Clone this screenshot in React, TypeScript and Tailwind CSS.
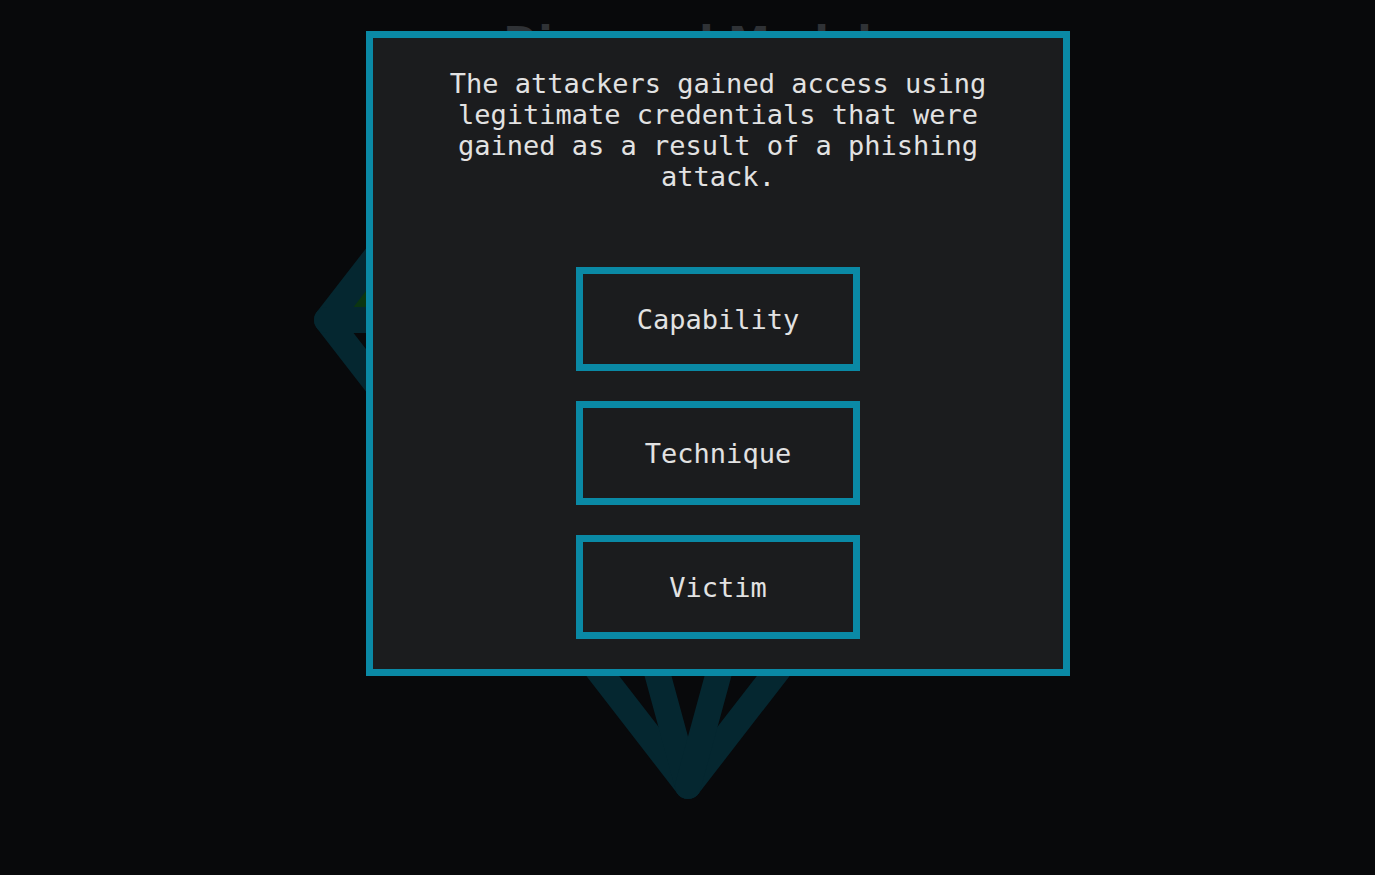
import React from "react";

const options = ["Capability", "Technique", "Victim"];

export default function App() {
  return (
    <div className="relative h-[875px] w-full overflow-hidden bg-[#08090b]">
      <h1
        className="pt-[22px] text-center text-[42px] font-bold leading-[42px] text-[#2f3236]"
        style={{ fontFamily: '"DejaVu Sans", sans-serif' }}
      >
        Diamond Model
      </h1>

      <svg
        className="absolute left-0 top-[60px]"
        width="1375"
        height="815"
        viewBox="0 60 1375 815"
      >
        <polygon points="338,307 520,307 520,72" fill="#0b3511" />
        <g
          stroke="#052730"
          strokeWidth="26"
          strokeLinejoin="round"
          strokeLinecap="round"
          fill="none"
        >
          <polyline points="688,-146 327,320 688,786 1049,320 688,-146" />
          <line x1="327" y1="320" x2="1049" y2="320" />
          <line x1="688" y1="786" x2="561" y2="320" />
          <line x1="688" y1="786" x2="815" y2="320" />
        </g>
      </svg>

      <div
        className="absolute left-[366px] top-[31px] flex w-[704px] flex-col items-center border-[7px] border-[#0a89a5] bg-[#1b1c1e] px-[40px] pb-[30px] pt-[30px] text-[#e2e2e2]"
        style={{ fontFamily: '"DejaVu Sans Mono", monospace' }}
      >
        <p className="text-center text-[27px] leading-[31px]">
          The attackers gained access using legitimate credentials that were
          gained as a result of a phishing attack.
        </p>
        <div className="mt-[75px] flex flex-col gap-[30px]">
          {options.map((o) => (
            <button
              key={o}
              className="flex h-[104px] w-[284px] items-center justify-center border-[7px] border-[#0a89a5] bg-[#1b1c1e] text-[27px] leading-[31px] text-[#e2e2e2]"
              style={{ fontFamily: '"DejaVu Sans Mono", monospace' }}
            >
              {o}
            </button>
          ))}
        </div>
      </div>
    </div>
  );
}
